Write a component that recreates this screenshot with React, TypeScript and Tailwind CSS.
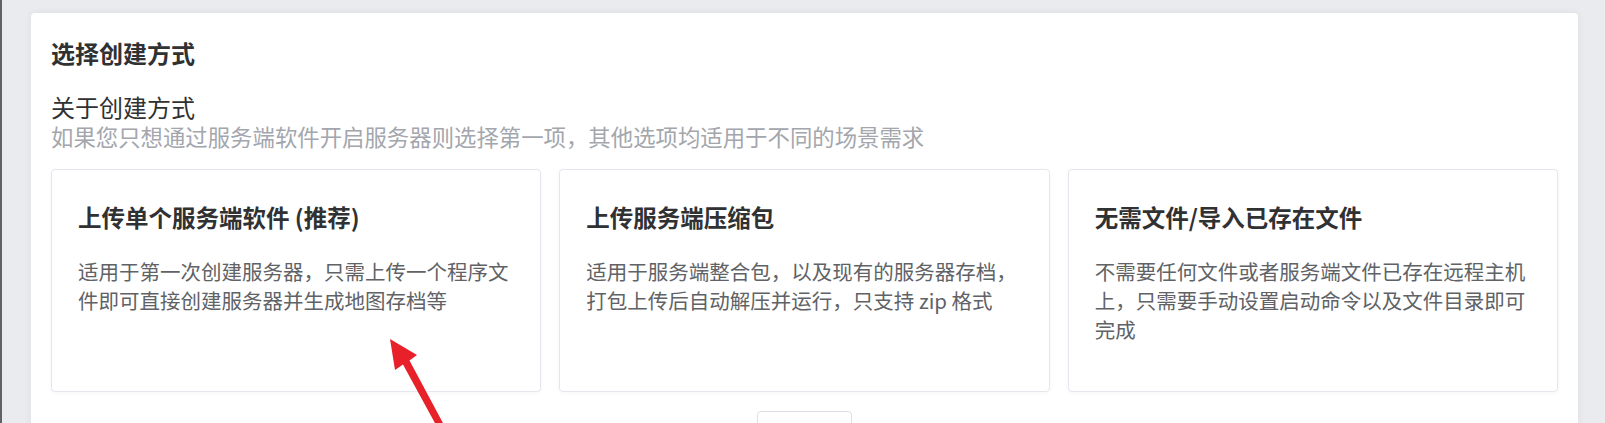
import React from "react";

const modes = [
    {
        title: "上传单个服务端软件 (推荐)",
        desc: "适用于第一次创建服务器，只需上传一个程序文件即可直接创建服务器并生成地图存档等",
    },
    {
        title: "上传服务端压缩包",
        desc: "适用于服务端整合包，以及现有的服务器存档，打包上传后自动解压并运行，只支持 zip 格式",
    },
    {
        title: "无需文件/导入已存在文件",
        desc: "不需要任何文件或者服务端文件已存在远程主机上，只需要手动设置启动命令以及文件目录即可完成",
    },
];

function ModeCard({ title, desc }: { title: string; desc: string }) {
    return (
        <div className="h-[223px] rounded-[4px] border border-[#e4e7ed] bg-white px-[26px] pt-[32px] shadow-[0_1px_4px_rgba(0,0,0,0.04)] cursor-pointer">
            <div className="text-[23.5px] leading-[30px] font-bold text-[#303133]">
                {title}
            </div>
            <p className="mt-[25px] text-[20.5px] leading-[29px] text-[#606266]">
                {desc}
            </p>
        </div>
    );
}

export default function App() {
    return (
        <div
            className="relative min-h-screen overflow-hidden border-l-2 border-[#5f6368] bg-[#e9ebee] pl-[29px] pr-[27px] pt-[13px]"
            style={{ fontFamily: '"Noto Sans CJK SC", "Noto Sans", sans-serif' }}
        >
            <div className="rounded-[4px] bg-white px-5 pt-[24px] pb-6 shadow-[0_0_8px_rgba(0,0,0,0.06)]">
                <h2 className="text-[24px] leading-[32px] font-bold text-[#303133]">
                    选择创建方式
                </h2>
                <div className="mt-[24px] text-[24px] leading-[28px] text-[#303133]">
                    关于创建方式
                </div>
                <div className="text-[22.4px] leading-[30px] text-[#a3a6ad]">
                    如果您只想通过服务端软件开启服务器则选择第一项，其他选项均适用于不同的场景需求
                </div>

                <div className="mt-[18px] grid grid-cols-3 gap-[18px]">
                    {modes.map((m) => (
                        <ModeCard key={m.title} title={m.title} desc={m.desc} />
                    ))}
                </div>

                <div className="mt-[19px] flex justify-center">
                    <button className="h-[40px] w-[95px] rounded-[4px] border border-[#dcdfe6] bg-white text-[16px] text-[#606266]">
                        下一步
                    </button>
                </div>
            </div>

            {/* annotation arrow over the first card */}
            <svg
                className="pointer-events-none absolute left-0 top-0"
                width="1605"
                height="423"
                viewBox="0 0 1605 423"
            >
                <polygon
                    points="388,339 415,355 407.5,360.5 449,438 443,441.5 401,364.5 393,370"
                    fill="#e8202a"
                />
            </svg>
        </div>
    );
}
